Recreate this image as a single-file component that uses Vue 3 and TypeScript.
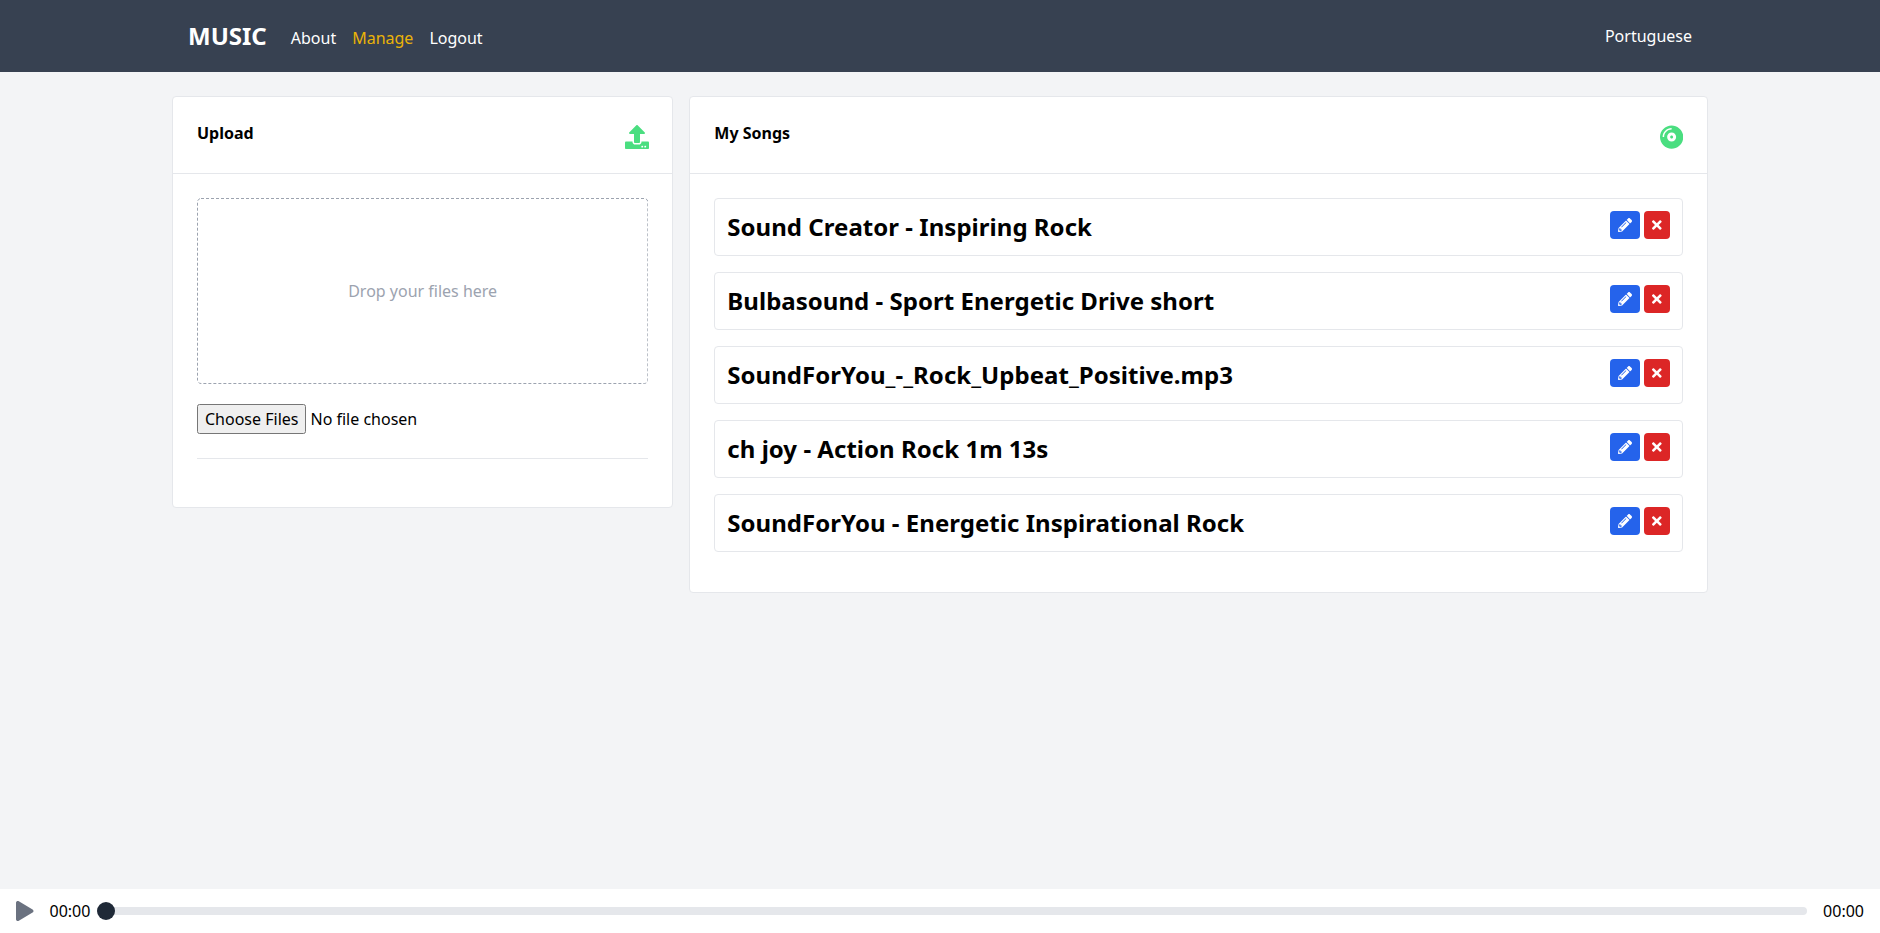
<script setup lang="ts">
import { ref } from 'vue'

interface Song {
  id: number
  name: string
}

const songs = ref<Song[]>([
  { id: 1, name: 'Sound Creator - Inspiring Rock' },
  { id: 2, name: 'Bulbasound - Sport Energetic Drive short' },
  { id: 3, name: 'SoundForYou_-_Rock_Upbeat_Positive.mp3' },
  { id: 4, name: 'ch joy - Action Rock 1m 13s' },
  { id: 5, name: 'SoundForYou - Energetic Inspirational Rock' },
])

const links = [
  { label: 'About', active: false },
  { label: 'Manage', active: true },
  { label: 'Logout', active: false },
]

const seek = ref('00:00')
const duration = ref('00:00')

function removeSong(id: number): void {
  songs.value = songs.value.filter((song) => song.id !== id)
}
</script>

<template>
  <div class="page">
    <header class="header">
      <nav class="container nav">
        <a class="brand" href="#">MUSIC</a>
        <ul class="links">
          <li v-for="link in links" :key="link.label">
            <a href="#" :class="{ active: link.active }">{{ link.label }}</a>
          </li>
        </ul>
        <a class="locale" href="#">Portuguese</a>
      </nav>
    </header>

    <main class="container grid">
      <section class="card upload">
        <div class="card-head">
          <span class="card-title">Upload</span>
          <svg class="head-icon upload-icon" width="24" height="24" viewBox="0 0 512 512" aria-hidden="true">
            <path d="M296 384h-80c-13.3 0-24-10.7-24-24V192h-87.7c-17.8 0-26.7-21.5-14.1-34.1L242.3 5.7c7.5-7.5 19.8-7.5 27.3 0l152.2 152.2c12.6 12.6 3.7 34.1-14.1 34.1H320v168c0 13.3-10.7 24-24 24zm216-8v112c0 13.3-10.7 24-24 24H24c-13.3 0-24-10.7-24-24V376c0-13.3 10.7-24 24-24h136v8c0 30.9 25.1 56 56 56h80c30.9 0 56-25.1 56-56v-8h136c13.3 0 24 10.7 24 24zm-124 88c0-11-9-20-20-20s-20 9-20 20 9 20 20 20 20-9 20-20zm64 0c0-11-9-20-20-20s-20 9-20 20 9 20 20 20 20-9 20-20z" />
          </svg>
        </div>
        <div class="card-body">
          <div class="dropzone">
            <svg class="outline" aria-hidden="true"><rect x="0.5" y="0.5" rx="3.5" /></svg>
            Drop your files here
          </div>
          <input class="file" type="file" multiple />
          <hr class="divider" />
        </div>
      </section>

      <section class="card songs">
        <div class="card-head">
          <span class="card-title">My Songs</span>
          <svg class="head-icon" width="23.25" height="24" viewBox="0 0 496 512" aria-hidden="true">
            <path d="M248 8C111 8 0 119 0 256s111 248 248 248 248-111 248-248S385 8 248 8zM88 256H56c0-105.9 86.1-192 192-192v32c-88.2 0-160 71.8-160 160zm160 96c-53 0-96-43-96-96s43-96 96-96 96 43 96 96-43 96-96 96zm0-128c-17.7 0-32 14.3-32 32s14.3 32 32 32 32-14.3 32-32-14.3-32-32-32z" />
          </svg>
        </div>
        <div class="card-body">
          <article v-for="song in songs" :key="song.id" class="song">
            <h4 class="song-name">{{ song.name }}</h4>
            <div class="actions">
              <button class="btn edit" type="button" aria-label="Edit">
                <svg width="14" height="14" viewBox="0 0 512 512" aria-hidden="true">
                  <path d="M497.9 142.1l-46.1 46.1c-4.7 4.7-12.3 4.7-17 0l-111-111c-4.7-4.7-4.7-12.3 0-17l46.1-46.1c18.7-18.7 49.1-18.7 67.9 0l60.1 60.1c18.8 18.7 18.8 49.1 0 67.9zM284.2 99.8L21.6 362.4.4 483.9c-2.9 16.4 11.4 30.6 27.8 27.8l121.5-21.3 262.6-262.6c4.7-4.7 4.7-12.3 0-17l-111-111c-4.8-4.7-12.4-4.7-17.1 0zM124.1 339.9c-5.5-5.5-5.5-14.3 0-19.8l154-154c5.5-5.5 14.3-5.5 19.8 0s5.5 14.3 0 19.8l-154 154c-5.5 5.5-14.3 5.5-19.8 0zM88 424h48v36.3l-64.5 11.3-31.1-31.1L51.7 376H88v48z" />
                </svg>
              </button>
              <button class="btn remove" type="button" aria-label="Delete" @click="removeSong(song.id)">
                <svg width="9.625" height="14" viewBox="0 0 352 512" aria-hidden="true">
                  <path d="M242.72 256l100.07-100.07c12.28-12.28 12.28-32.19 0-44.48l-22.24-22.24c-12.28-12.28-32.19-12.28-44.48 0L176 189.28 75.93 89.21c-12.28-12.28-32.19-12.28-44.48 0L9.21 111.45c-12.28 12.28-12.28 32.19 0 44.48L109.28 256 9.21 356.07c-12.28 12.28-12.28 32.19 0 44.48l22.24 22.24c12.28 12.28 32.2 12.28 44.48 0L176 322.72l100.07 100.07c12.28 12.28 32.2 12.28 44.48 0l22.24-22.24c12.28-12.28 12.28-32.19 0-44.48L242.72 256z" />
                </svg>
              </button>
            </div>
          </article>
        </div>
      </section>
    </main>

    <footer class="player">
      <button class="play" type="button" aria-label="Play">
        <svg width="17.5" height="20" viewBox="0 0 448 512" aria-hidden="true">
          <path d="M424.4 214.7L72.4 6.6C43.8-10.3 0 6.1 0 47.9V464c0 37.5 40.7 60.1 72.4 41.3l352-208c31.4-18.5 31.5-64.1 0-82.6z" />
        </svg>
      </button>
      <span class="time">{{ seek }}</span>
      <div class="track"><span class="thumb"></span></div>
      <span class="time">{{ duration }}</span>
    </footer>
  </div>
</template>

<style>
body {
  margin: 0;
  background: #f3f4f6;
}
</style>

<style scoped>
.page,
.page * {
  box-sizing: border-box;
}

.page {
  display: flex;
  flex-direction: column;
  height: 100vh;
  font-family: 'Noto Sans', sans-serif;
  font-size: 16px;
  line-height: 24px;
  color: #000;
  background: #f3f4f6;
}

.page a {
  color: #fff;
  text-decoration: none;
}

.page svg {
  display: block;
  fill: currentColor;
}

.container {
  width: 100%;
  max-width: 1536px;
  margin: 0 auto;
}

.header {
  background: #374151;
}

.nav {
  display: flex;
  align-items: center;
  padding: 20px 16px;
}

.page .brand {
  margin-right: 24px;
  font-size: 24px;
  line-height: 32px;
  font-weight: 700;
}

.links {
  display: flex;
  gap: 16px;
  margin: 4px 0 0;
  padding: 0;
  list-style: none;
}

.page .links .active {
  color: #eab308;
}

.locale {
  margin-left: auto;
}

.grid {
  display: grid;
  grid-template-columns: repeat(3, minmax(0, 1fr));
  align-items: start;
  gap: 16px;
  margin-top: 24px;
}

.card {
  background: #fff;
  border: 1px solid #e5e7eb;
  border-radius: 4px;
}

.songs {
  grid-column: span 2;
}

.card-head {
  display: flex;
  justify-content: space-between;
  align-items: flex-start;
  padding: 24px 24px 20px;
  border-bottom: 1px solid #e5e7eb;
}

.card-title {
  font-weight: 700;
}

.head-icon {
  margin: 4px 0;
  color: #4ade80;
}

.upload-icon {
  margin-right: -0.5px;
}

.card-body {
  padding: 24px;
}

.dropzone {
  position: relative;
  padding: 81px 1px;
  text-align: center;
  color: #9ca3af;
}

.page .outline {
  position: absolute;
  inset: 0;
  width: 100%;
  height: 100%;
  fill: none;
}

.outline rect {
  width: calc(100% - 1px);
  height: calc(100% - 1px);
  stroke: #9ca3af;
  stroke-width: 1px;
  stroke-dasharray: 3 2;
}

.file {
  display: block;
  width: 100%;
  height: 30px;
  margin-top: 20px;
  font: inherit;
  color: inherit;
}

.file::file-selector-button {
  height: 30px;
  font: inherit;
}

.divider {
  height: 0;
  margin: 24px 0;
  border: 0;
  border-top: 1px solid #e5e7eb;
}

.song {
  display: flex;
  justify-content: space-between;
  align-items: flex-start;
  margin-bottom: 16px;
  padding: 12px;
  border: 1px solid #e5e7eb;
  border-radius: 4px;
}

.song-name {
  margin: 0;
  font-size: 24px;
  line-height: 32px;
  font-weight: 700;
  letter-spacing: 0.03px;
}

.actions {
  display: flex;
  gap: 4px;
}

.btn {
  display: flex;
  align-items: center;
  height: 28px;
  padding: 0 8px;
  color: #fff;
  border: 0;
  border-radius: 4px;
}

.edit {
  background: #2563eb;
}

.remove {
  background: #dc2626;
}

.player {
  display: flex;
  align-items: center;
  gap: 16px;
  height: 44px;
  margin-top: auto;
  padding: 8px 16px;
  background: #fff;
}

.play {
  padding: 0;
  color: #6b7280;
  background: none;
  border: 0;
}

.track {
  display: flex;
  align-items: center;
  flex: 1;
  height: 8px;
  background: #e5e7eb;
  border-radius: 4px;
}

.thumb {
  flex: none;
  width: 18px;
  height: 18px;
  margin-left: -9.5px;
  background: #1f2937;
  border-radius: 50%;
}
</style>
